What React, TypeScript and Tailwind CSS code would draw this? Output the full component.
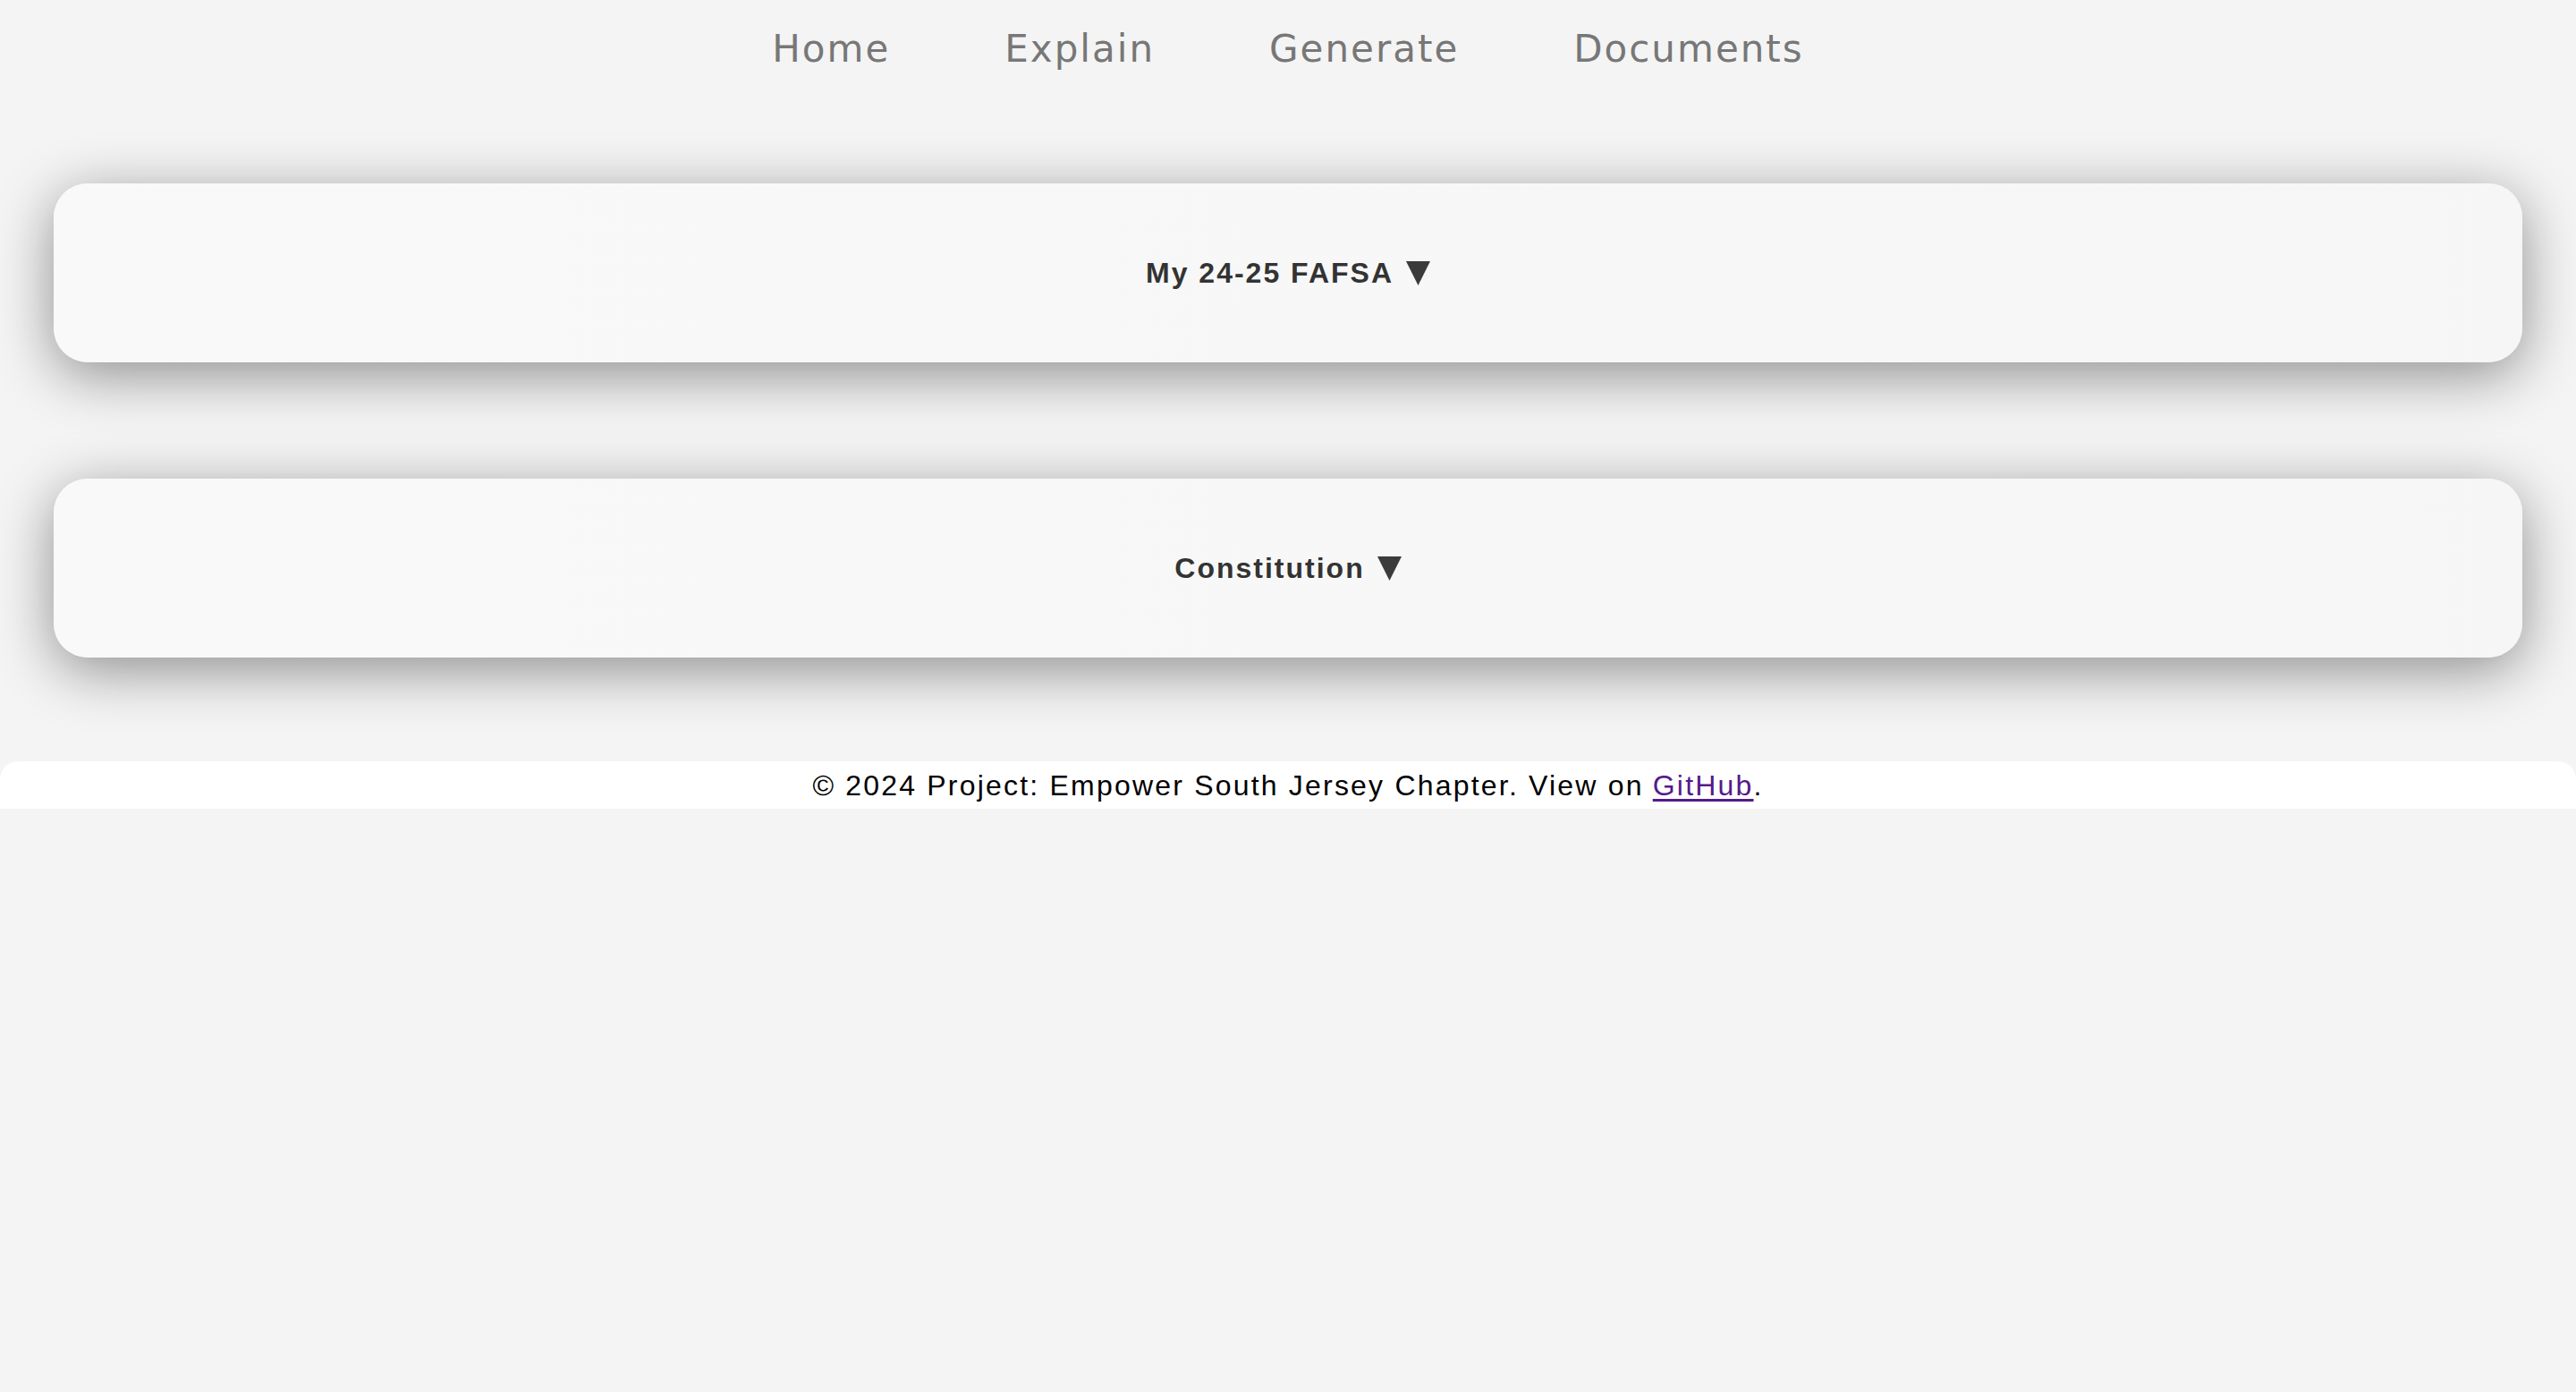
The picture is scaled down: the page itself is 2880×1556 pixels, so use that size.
const navItems = ["Home", "Explain", "Generate", "Documents"];
const sections = ["My 24-25 FAFSA", "Constitution"];

function Caret() {
  return (
    <svg width="27" height="27" viewBox="0 0 27 27" className="ml-[14px] shrink-0">
      <polygon points="0,0 27,0 13.5,27" fill="#3b3b3b" />
    </svg>
  );
}

export default function App() {
  return (
    <div className="min-h-[1556px] bg-[#f4f4f4] font-['Liberation_Sans',Arial,sans-serif] tracking-[2px]">
      {/* top navigation */}
      <nav className="h-[109px] flex items-center justify-center gap-[128px] font-['DejaVu_Sans',Verdana,sans-serif] text-[42px] leading-[49px] text-[#777777]">
        {navItems.map((item) => (
          <a key={item} className="cursor-pointer">
            {item}
          </a>
        ))}
      </nav>

      {/* collapsible sections */}
      <main className="flex flex-col gap-[130px] px-[60px] pt-[96px]">
        {sections.map((title) => (
          <div
            key={title}
            className="h-[200px] rounded-[38px] bg-gradient-to-r from-[#f9f9f9] to-[#f6f6f6] shadow-[0_14px_64px_rgba(0,0,0,0.42)] flex items-center justify-center"
          >
            <span className="flex items-center text-[32px] font-bold text-[#333333]">
              {title}
              <Caret />
            </span>
          </div>
        ))}
      </main>

      <footer className="mt-[116px] h-[53px] rounded-t-[20px] bg-white flex items-center justify-center text-[32px] tracking-[2.2px] text-black">
        © 2024 Project: Empower South Jersey Chapter. View on{" "}
        <a className="ml-[10px] text-[#551a8b] underline underline-offset-[4px] cursor-pointer">GitHub</a>.
      </footer>
    </div>
  );
}
